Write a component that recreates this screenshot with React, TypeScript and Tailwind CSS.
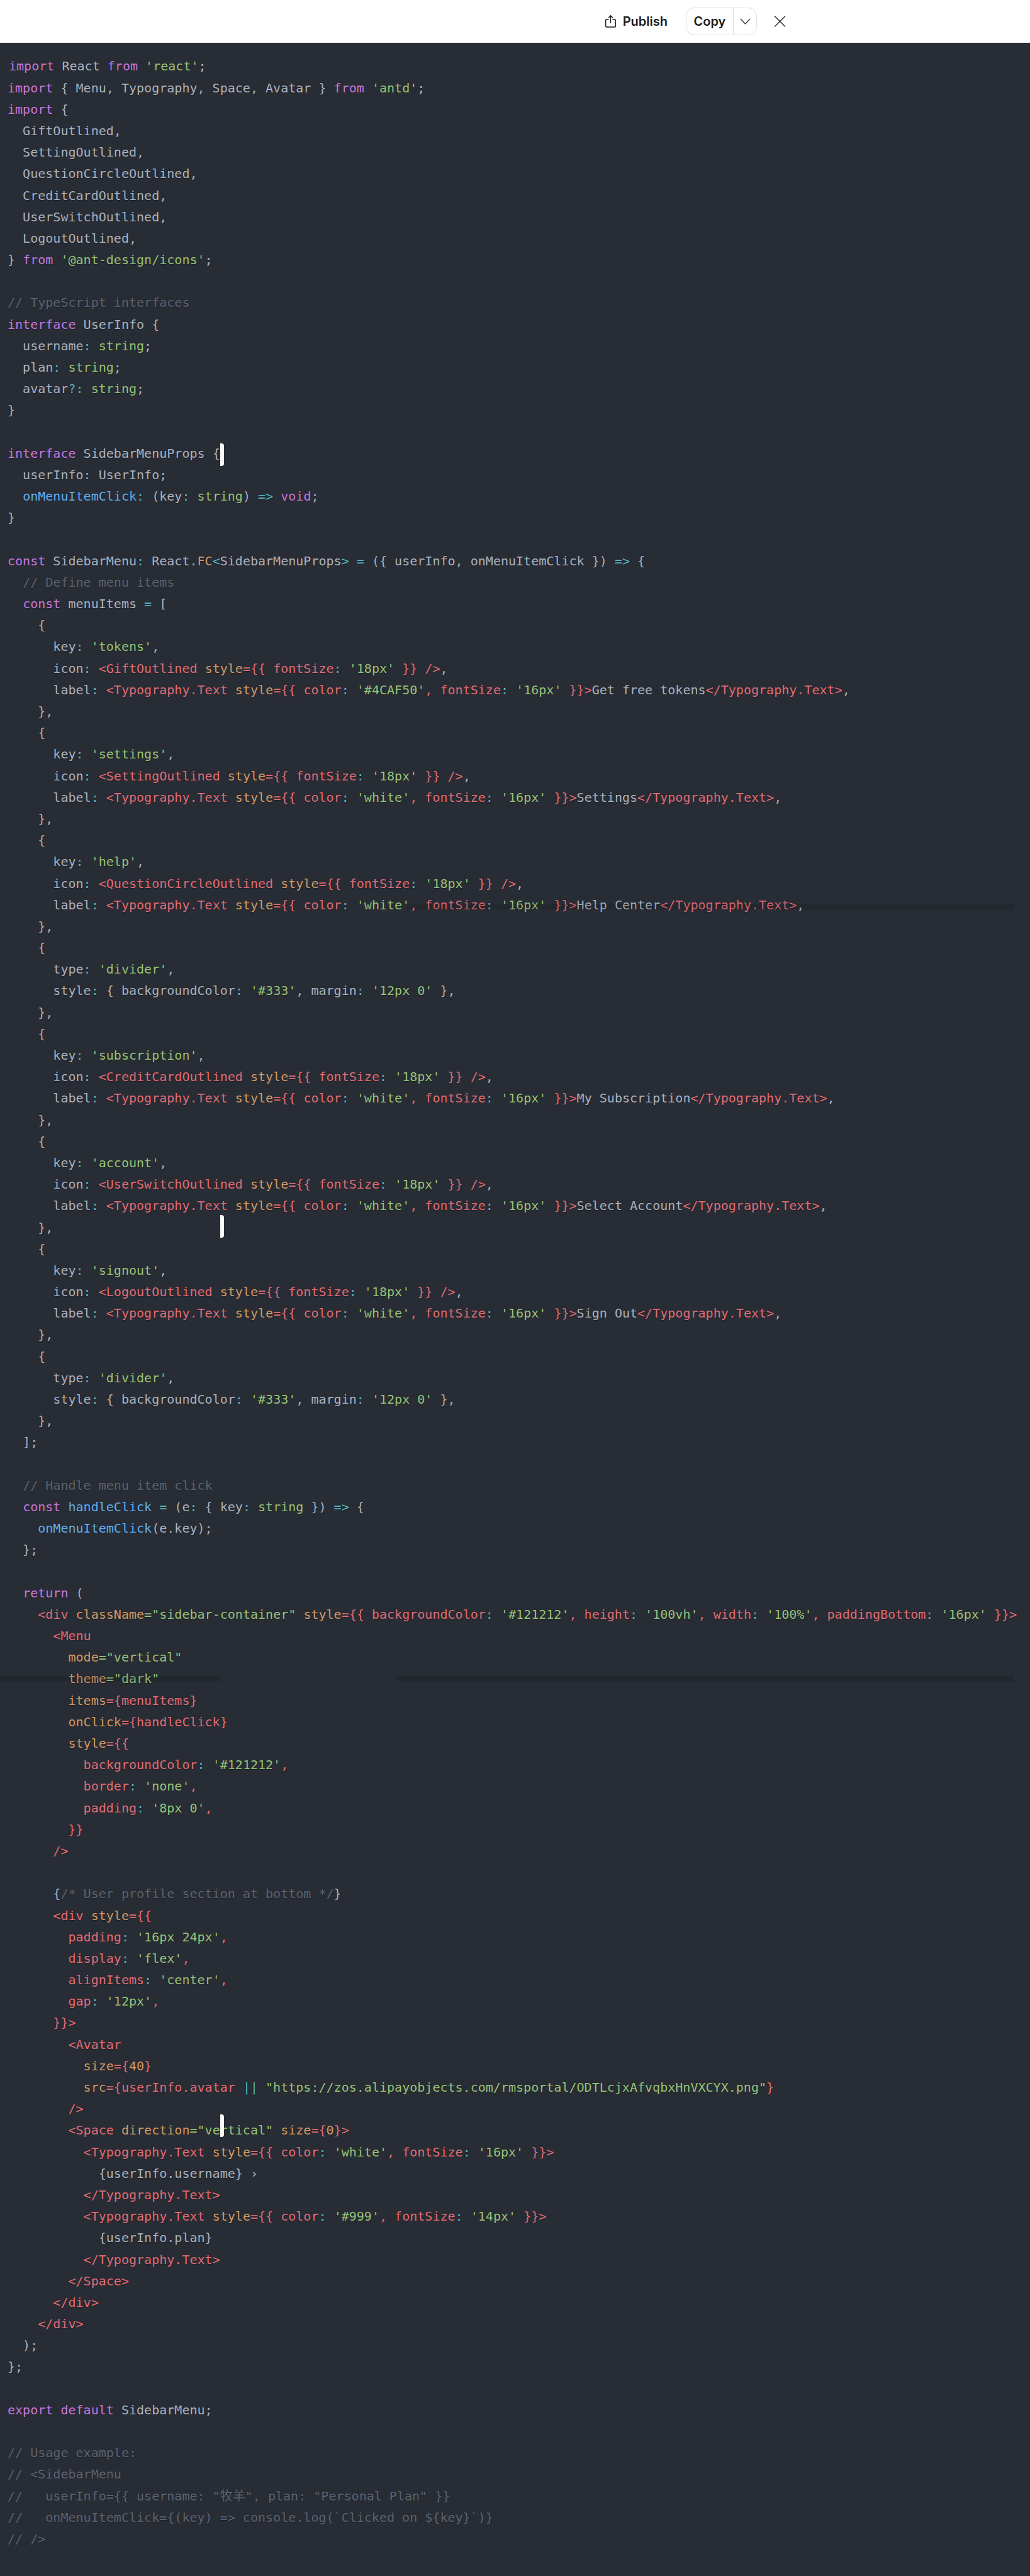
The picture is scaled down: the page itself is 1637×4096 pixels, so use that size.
import React from "react";

const colors: Record<string, string> = {
  d: "text-[#abb2bf]",
  k: "text-[#c678dd]",
  g: "text-[#98c379]",
  r: "text-[#e06c75]",
  o: "text-[#d19a66]",
  c: "text-[#56b6c2]",
  b: "text-[#61afef]",
  m: "text-[#5c6370]",
};

// menu item helpers, the three rows repeat a lot
const keyRow = (name: string) => `      key«c»: «g»'${name}'«d»,`;
const iconRow = (name: string) =>
  `      icon«c»: «r»<${name} «o»style«r»={{ fontSize«c»: «g»'18px' «r»}} />«d»,`;
const labelRow = (color: string, text: string) =>
  `      label«c»: «r»<Typography.Text «o»style«r»={{ color«c»: «g»'${color}'«r», fontSize«c»: «g»'16px' «r»}}>«d»${text}«r»</Typography.Text>«d»,`;

const dividerRows = [
  "    {",
  "      type«c»: «g»'divider'«d»,",
  "      style«c»: «d»{ backgroundColor«c»: «g»'#333'«d», margin«c»: «g»'12px 0' «d»},",
  "    },",
];

const item = (name: string, icon: string, color: string, text: string) => [
  "    {",
  keyRow(name),
  iconRow(icon),
  labelRow(color, text),
  "    },",
];

const code: string[] = [
  "«k»import «d»React «k»from «g»'react'«d»;",
  "«k»import «d»{ Menu, Typography, Space, Avatar } «k»from «g»'antd'«d»;",
  "«k»import «d»{",
  "  GiftOutlined,",
  "  SettingOutlined,",
  "  QuestionCircleOutlined,",
  "  CreditCardOutlined,",
  "  UserSwitchOutlined,",
  "  LogoutOutlined,",
  "} «k»from «g»'@ant-design/icons'«d»;",
  "",
  "«m»// TypeScript interfaces",
  "«k»interface «d»UserInfo {",
  "  username«c»: «g»string«d»;",
  "  plan«c»: «g»string«d»;",
  "  avatar«c»?: «g»string«d»;",
  "}",
  "",
  "«k»interface «d»SidebarMenuProps {",
  "  userInfo«c»: «d»UserInfo;",
  "  «b»onMenuItemClick«c»: «d»(key«c»: «g»string«d»)«c» => «k»void«d»;",
  "}",
  "",
  "«k»const «d»SidebarMenu«c»: «d»React.«o»FC«c»<«d»SidebarMenuProps«c»> = «d»({ userInfo, onMenuItemClick })«c» => «d»{",
  "  «m»// Define menu items",
  "  «k»const «d»menuItems «c»= «d»[",
  ...item("tokens", "GiftOutlined", "#4CAF50", "Get free tokens"),
  ...item("settings", "SettingOutlined", "white", "Settings"),
  ...item("help", "QuestionCircleOutlined", "white", "Help Center"),
  ...dividerRows,
  ...item("subscription", "CreditCardOutlined", "white", "My Subscription"),
  ...item("account", "UserSwitchOutlined", "white", "Select Account"),
  ...item("signout", "LogoutOutlined", "white", "Sign Out"),
  ...dividerRows,
  "  ];",
  "",
  "  «m»// Handle menu item click",
  "  «k»const «b»handleClick «c»= «d»(e«c»: «d»{ key«c»: «g»string «d»})«c» => «d»{",
  "    «b»onMenuItemClick«d»(e.key);",
  "  };",
  "",
  "  «k»return «d»(",
  "    «r»<div «o»className«g»=\"sidebar-container\" «o»style«r»={{ backgroundColor«c»: «g»'#121212'«r», height«c»: «g»'100vh'«r», width«c»: «g»'100%'«r», paddingBottom«c»: «g»'16px' «r»}}>",
  "      «r»<Menu",
  "        «o»mode«g»=\"vertical\"",
  "        «o»theme«g»=\"dark\"",
  "        «o»items«r»={menuItems}",
  "        «o»onClick«r»={handleClick}",
  "        «o»style«r»={{",
  "          «r»backgroundColor«c»: «g»'#121212'«r»,",
  "          «r»border«c»: «g»'none'«r»,",
  "          «r»padding«c»: «g»'8px 0'«r»,",
  "        «r»}}",
  "      «r»/>",
  "",
  "      {«m»/* User profile section at bottom */«d»}",
  "      «r»<div «o»style«r»={{",
  "        «r»padding«c»: «g»'16px 24px'«r»,",
  "        «r»display«c»: «g»'flex'«r»,",
  "        «r»alignItems«c»: «g»'center'«r»,",
  "        «r»gap«c»: «g»'12px'«r»,",
  "      «r»}}>",
  "        «r»<Avatar",
  "          «o»size«r»={«o»40«r»}",
  "          «o»src«r»={userInfo.avatar «c»|| «g»\"https://zos.alipayobjects.com/rmsportal/ODTLcjxAfvqbxHnVXCYX.png\"«r»}",
  "        «r»/>",
  "        «r»<Space «o»direction«g»=\"vertical\" «o»size«r»={«o»0«r»}>",
  "          «r»<Typography.Text «o»style«r»={{ color«c»: «g»'white'«r», fontSize«c»: «g»'16px' «r»}}>",
  "            {userInfo.username} ›",
  "          «r»</Typography.Text>",
  "          «r»<Typography.Text «o»style«r»={{ color«c»: «g»'#999'«r», fontSize«c»: «g»'14px' «r»}}>",
  "            {userInfo.plan}",
  "          «r»</Typography.Text>",
  "        «r»</Space>",
  "      «r»</div>",
  "    «r»</div>",
  "  );",
  "};",
  "",
  "«k»export default «d»SidebarMenu;",
  "",
  "«m»// Usage example:",
  "«m»// <SidebarMenu",
  "«m»//   userInfo={{ username: \"牧羊\", plan: \"Personal Plan\" }}",
  "«m»//   onMenuItemClick={(key) => console.log(`Clicked on ${key}`)}",
  "«m»// />",
];

function CodeLine({ source, first }: { source: string; first: boolean }) {
  const parts = source.split(/«(\w)»/);
  const spans = [<span key="first">{parts[0]}</span>];
  for (let i = 1; i < parts.length; i += 2) {
    spans.push(
      <span key={i} className={colors[parts[i]]}>
        {parts[i + 1]}
      </span>
    );
  }
  return <div className={first ? "h-[34.2px] whitespace-pre pl-[2px]" : "h-[34.2px] whitespace-pre"}>{spans}</div>;
}

function Caret({ top }: { top: string }) {
  return <div className={`absolute left-[350px] w-[6px] h-[36px] rounded-r-[4px] bg-[#fafaf7] ${top}`} />;
}

export default function App() {
  return (
    <div className="w-[1637px] h-[4096px] overflow-hidden bg-white font-['Inter',sans-serif]">
      <header className="h-[67.6px] flex items-center justify-end pr-[388px] text-[20px] font-semibold text-[#1a1a1a]">
        <div className="flex items-center gap-[11px]">
          <svg width="17" height="20" viewBox="0 0 17 20" fill="none" stroke="#1a1a1a" strokeWidth="1.4">
            <path d="M5.5 7H1.7a1 1 0 0 0-1 1v10a1 1 0 0 0 1 1h13.6a1 1 0 0 0 1-1V8a1 1 0 0 0-1-1h-3.8" />
            <path d="M8.5 13V1M5 4.3 8.5.9 12 4.3" />
          </svg>
          <span>Publish</span>
        </div>
        <div className="ml-[29px] flex h-[44px] w-[113px] rounded-[13px] border-[1.5px] border-[#e0e0e0]">
          <div className="w-[75px] flex items-center justify-center border-r-[1.5px] border-[#e0e0e0]">Copy</div>
          <div className="flex-1 flex items-center justify-center">
            <svg width="17" height="10" viewBox="0 0 17 10" fill="none" stroke="#333" strokeWidth="1.3">
              <path d="M1 1l7.5 8L16 1" />
            </svg>
          </div>
        </div>
        <svg className="ml-[27px]" width="19" height="18" viewBox="0 0 19 18" fill="none" stroke="#333" strokeWidth="1.5">
          <path d="M1 .5l17 17M18 .5l-17 17" />
        </svg>
      </header>
      <main className="relative h-[4028.4px] bg-[#282c34] pt-[20.8px] pl-[12px] font-['DejaVu_Sans_Mono','Noto_Sans_CJK_SC',monospace] text-[20.04px] leading-[34.2px] text-[#abb2bf] [text-shadow:0_1px_rgba(0,0,0,0.3)]">
        {code.map((line, i) => (
          <CodeLine key={i} source={line} first={i === 0} />
        ))}
        <Caret top="top-[637px]" />
        <Caret top="top-[1864px]" />
        <Caret top="top-[3294px]" />
        <div className="absolute left-[647px] right-[25px] top-[1369px] h-[9px] bg-black/10" />
        <div className="absolute left-0 w-[351px] top-[2597px] h-[9px] bg-black/10" />
        <div className="absolute left-[631px] right-[25px] top-[2597px] h-[9px] bg-black/10" />
      </main>
    </div>
  );
}
